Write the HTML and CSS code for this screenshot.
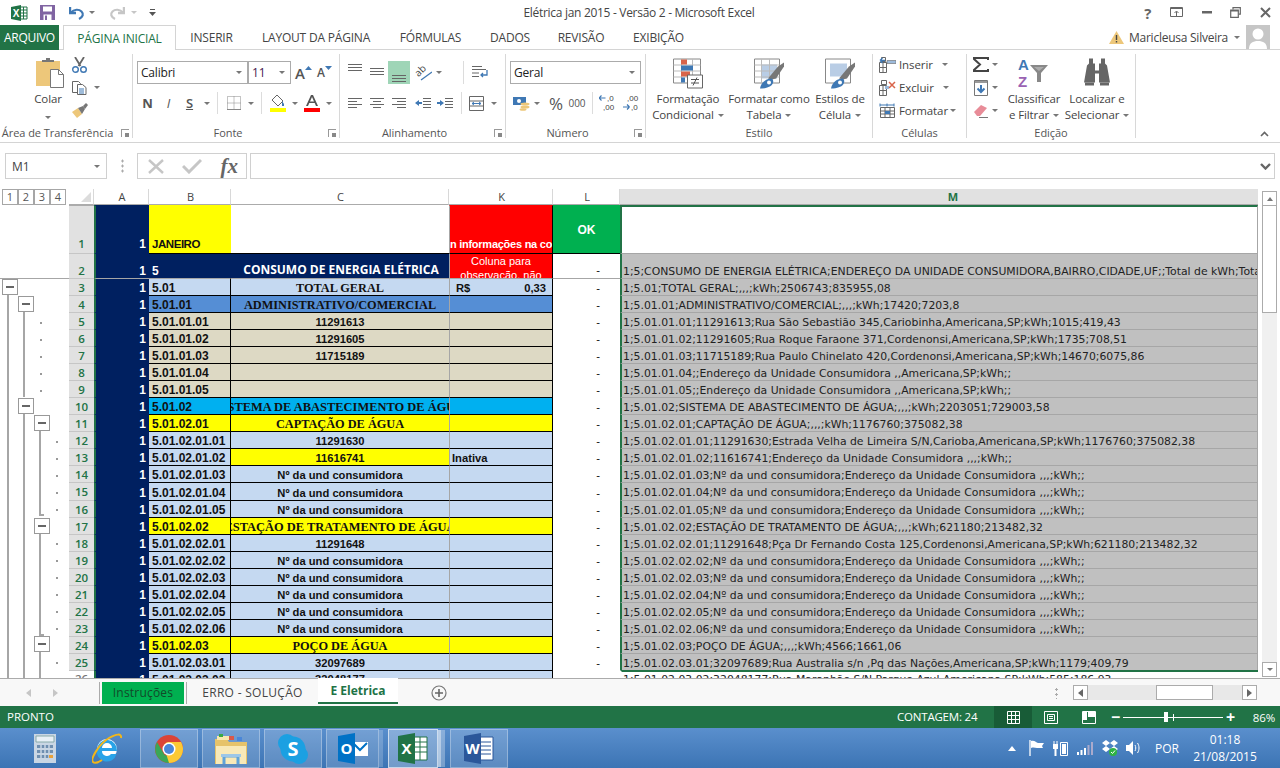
FILE: index.html
```html
<!DOCTYPE html>
<html lang="pt-BR">
<head>
<meta charset="utf-8">
<title>Elétrica jan 2015 - Versão 2 - Microsoft Excel</title>
<link rel="stylesheet" href="styles.css">
</head>
<body>
<div class="app">
  <header class="titlebar">
    <div class="qat">
      <svg class="q-excel" width="17" height="16" viewBox="0 0 17 16"><path d="M9 2h7v12H9z" fill="#fff" stroke="#217346"/><path d="M9 5h7M9 8h7M9 11h7M12.5 2v12" stroke="#217346"/><path d="M0 2l10-2v16L0 14z" fill="#217346"/><text x="5" y="11.5" text-anchor="middle" class="svgx">X</text></svg>
      <svg class="q-save" width="15" height="15" viewBox="0 0 15 15"><path d="M0 0h15v15H0z" fill="#8064a2"/><path d="M3 1.500h9v5H3z" fill="#fff"/><path d="M3.500 9.500h8V15h-8z" fill="#fff"/><path d="M5 10.500h2V15H5z" fill="#8064a2"/></svg>
      <svg class="q-undo" width="16" height="14" viewBox="0 0 16 14"><path d="M1 1v6h6" fill="none" stroke="#3f78b4" stroke-width="2.400"/><path d="M2 6.500C5 3 10 3 12.500 5.500S14 11 10 13" fill="none" stroke="#3f78b4" stroke-width="2.200"/></svg>
      <i class="tri q-c1"></i>
      <svg class="q-redo" width="16" height="14" viewBox="0 0 16 14"><path d="M15 1v6H9" fill="none" stroke="#c6c6c6" stroke-width="2.400"/><path d="M14 6.500C11 3 6 3 3.500 5.500S2 11 6 13" fill="none" stroke="#c6c6c6" stroke-width="2.200"/></svg>
      <i class="tri tri-l q-c2"></i>
      <svg class="q-cust" width="7" height="7" viewBox="0 0 7 7"><path d="M1 .5h5" stroke="#555"/><path d="M0 3h7L3.500 7z" fill="#555"/></svg>
    </div>
    <div class="doc-title">Elétrica jan 2015 - Versão 2 - Microsoft Excel</div>
    <div class="winbtns">
      <span class="wb help">?</span>
      <span class="wb"><svg width="14" height="11" viewBox="0 0 14 11"><path d="M.5.500h12v9H.5z" fill="none" stroke="#666"/><path d="M1 1h11v1H1z" fill="#666"/><path d="M6.500 9V4.500M4.500 6l2-2 2 2" fill="none" stroke="#666"/></svg></span>
      <span class="wb"><svg width="10" height="3" viewBox="0 0 10 3"><path d="M0 0h10v2.500H0z" fill="#666"/></svg></span>
      <span class="wb"><svg width="11" height="11" viewBox="0 0 11 11"><path d="M3 2.500V.7h7.300v6.500H8.500" fill="none" stroke="#666" stroke-width="1.200"/><path d="M.7 3h7.600v7.300H.7z" fill="#fff" stroke="#666" stroke-width="1.200"/><path d="M.7 3h7.600v1.500H.7z" fill="#666"/></svg></span>
      <span class="wb"><svg width="11" height="11" viewBox="0 0 11 11"><path d="M1 1l9 9M10 1l-9 9" stroke="#666" stroke-width="2"/></svg></span>
    </div>
  </header>

  <nav class="tabs">
    <div class="tab file">ARQUIVO</div>
    <div class="tab active">PÁGINA INICIAL</div>
    <div class="tab">INSERIR</div>
    <div class="tab">LAYOUT DA PÁGINA</div>
    <div class="tab">FÓRMULAS</div>
    <div class="tab">DADOS</div>
    <div class="tab">REVISÃO</div>
    <div class="tab">EXIBIÇÃO</div>
    <div class="user">
      <svg width="15" height="13" viewBox="0 0 15 13"><path d="M7.500 0L15 13H0z" fill="#edc77a"/><path d="M6.800 4h1.400v5H6.800zM6.800 10h1.400v1.500H6.800z" fill="#444"/></svg>
      <span class="uname">Maricleusa Silveira</span>
      <i class="tri tri-d"></i>
      <svg class="avatar" width="24" height="24" viewBox="0 0 24 24"><path d="M0 0h24v24H0z" fill="#c6c6c6"/><circle cx="12" cy="9" r="5.500" fill="#fff"/><path d="M3 24c0-6 4-8 9-8s9 2 9 8z" fill="#fff"/></svg>
    </div>
  </nav>

  <section class="ribbon">
    <div class="grp g1">
      <div class="body b-clip">
        <div class="big b-colar">
          <svg class="paste" width="28" height="31" viewBox="0 0 28 31"><path d="M0 3h24v25H0z" fill="#edc77a"/><path d="M6 4V2h4V0h4v2h4v2z" fill="#777"/><path d="M14.500 11.500h8l5 5v13h-13z" fill="#fff" stroke="#777"/><path d="M22.500 11.500v5h5" fill="none" stroke="#777"/></svg>
          <span class="lbl">Colar</span>
          <span class="lbl"><i class="tri tri-d0"></i></span>
        </div>
        <div class="smcol">
          <span class="sm"><svg width="15" height="16" viewBox="0 0 15 16"><path d="M3 0l5.500 9M12 0L6.500 9" stroke="#666" stroke-width="1.800" fill="none"/><circle cx="3.500" cy="12.500" r="2.800" fill="none" stroke="#3f78b4" stroke-width="1.400"/><circle cx="11.500" cy="12.500" r="2.800" fill="none" stroke="#3f78b4" stroke-width="1.400"/></svg></span>
          <span class="sm"><svg class="m-copy" width="15" height="14" viewBox="0 0 15 14"><path d="M.5.500h6l2 2v9h-8z" fill="#fff" stroke="#666"/><path d="M5.500 3.500h5l3.500 3v7H5.500z" fill="#fff" stroke="#666"/><path d="M7 8h5M7 10h5M7 12h5" stroke="#3f78b4"/></svg><i class="tri"></i></span>
          <span class="sm"><svg width="16" height="15" viewBox="0 0 16 15"><path d="M0 9l6-4 4 6-5 4z" fill="#edc77a"/><path d="M6 5l5-2 2 3-3 5z" fill="#777"/><path d="M11 3l3-3 2 2-3 4z" fill="#777"/></svg></span>
        </div>
      </div>
      <div class="lab has-l">Área de Transferência<i class="launch"></i></div>
    </div>

    <div class="grp g2">
      <div class="body col">
        <div class="rw r1">
          <div class="combo c-font"><span>Calibri</span><i class="tri"></i></div>
          <div class="combo c-size"><span class="sz">11</span><i class="tri"></i></div>
          <span class="ib f-a">A<svg width="7" height="4" viewBox="0 0 7 4"><path d="M0 4l3.500-4L7 4z" fill="#3f78b4"/></svg></span>
          <span class="ib f-a sm2">A<svg width="7" height="4" viewBox="0 0 7 4"><path d="M0 0l3.500 4L7 0z" fill="#3f78b4"/></svg></span>
        </div>
        <div class="rw r2">
          <span class="ib bf">N</span><span class="ib itf">I</span><span class="ib uf">S</span><i class="car"><i class="tri"></i></i>
          <i class="vs"></i>
          <span class="ib"><svg width="14" height="14" viewBox="0 0 14 14"><path d="M.5.500h13v13H.5zM7 .5v13M.5 7h13" fill="none" stroke="#888" stroke-dasharray="1 1"/><path d="M0 13.500h14" stroke="#888"/></svg></span><i class="car"><i class="tri"></i></i>
          <i class="vs v2"></i>
          <span class="ib"><svg width="16" height="18" viewBox="0 0 16 18"><path d="M2 6l5-5 6 6-5 5z" fill="#fff" stroke="#666"/><path d="M12 7l2 3v2h-2z" fill="#3f78b4"/><path d="M0 14h16v4H0z" fill="#ff0"/></svg></span><i class="car"><i class="tri"></i></i>
          <span class="ib"><svg width="16" height="18" viewBox="0 0 16 18"><path d="M2 12L7 1h2l5 11h-2l-1.300-3H5.300L4 12zM6 7.500h4L8 3z" fill="#555" fill-rule="evenodd"/><path d="M0 14h16v4H0z" fill="#f00"/></svg></span><i class="car"><i class="tri"></i></i>
        </div>
      </div>
      <div class="lab has-l">Fonte<i class="launch"></i></div>
    </div>

    <div class="grp g3">
      <div class="body col">
        <div class="rw r1">
          <span class="ib"><svg class="al-t" width="14" height="7" viewBox="0 0 14 7"><path d="M0 .5h14M0 3.500h14M0 6.500h14" stroke="#666"/></svg></span>
          <span class="ib"><svg class="al-m" width="14" height="7" viewBox="0 0 14 7"><path d="M0 .5h14M0 3.500h14M0 6.500h14" stroke="#666"/></svg></span>
          <span class="ib sel"><svg class="al-b" width="14" height="7" viewBox="0 0 14 7"><path d="M0 .5h14M0 3.500h14M0 6.500h14" stroke="#666"/></svg></span>
          <span class="ib ml2"><svg width="17" height="16" viewBox="0 0 17 16"><text x="1" y="10" class="svg-ab" transform="rotate(-45 5 8)">ab</text><path d="M6 15L17 7" stroke="#3f78b4" stroke-width="1.200"/></svg></span><i class="car c10"><i class="tri"></i></i>
          <i class="vs v3"></i>
          <span class="ib"><svg width="16" height="14" viewBox="0 0 16 14"><path d="M0 .5h10M0 3.500h14M0 7h7M0 10.500h7" stroke="#666"/><path d="M15 4v5h-6M11 7l-2 2 2 2" fill="none" stroke="#3f78b4" stroke-width="1.300"/></svg></span>
        </div>
        <div class="rw r2">
          <span class="ib"><svg width="14" height="11" viewBox="0 0 14 11"><path d="M0 .5h14M0 3.500h9M0 6.500h14M0 9.500h9" stroke="#666"/></svg></span>
          <span class="ib"><svg width="14" height="11" viewBox="0 0 14 11"><path d="M0 .5h14M3 3.500h8M0 6.500h14M3 9.500h8" stroke="#666"/></svg></span>
          <span class="ib"><svg width="14" height="11" viewBox="0 0 14 11"><path d="M0 .5h14M5 3.500h9M0 6.500h14M5 9.500h9" stroke="#666"/></svg></span>
          <span class="ib ml2"><svg width="16" height="11" viewBox="0 0 16 11"><path d="M8 .5h8M8 3.500h8M8 6.500h8M8 9.500h8" stroke="#666"/><path d="M0 5l4-3v2h3v2H4v2z" fill="#3f78b4"/></svg></span>
          <span class="ib"><svg width="16" height="11" viewBox="0 0 16 11"><path d="M8 .5h8M8 3.500h8M8 6.500h8M8 9.500h8" stroke="#666"/><path d="M7 5L3 2v2H0v2h3v2z" fill="#3f78b4"/></svg></span>
          <i class="vs v4"></i>
          <span class="ib"><svg width="15" height="15" viewBox="0 0 15 15"><path d="M.5.500h14v14H.5zM.5 5h14M.5 10h14" fill="none" stroke="#666"/><path d="M3 7.500h9M3 7.500l2-1.500M3 7.500l2 1.500M12 7.500L10 6M12 7.500L10 9" stroke="#3f78b4"/></svg></span><i class="car"><i class="tri"></i></i>
        </div>
      </div>
      <div class="lab has-l">Alinhamento<i class="launch"></i></div>
    </div>

    <div class="grp g4">
      <div class="body col">
        <div class="rw r1"><div class="combo c-num"><span>Geral</span><i class="tri"></i></div></div>
        <div class="rw r2">
          <span class="ib"><svg width="17" height="15" viewBox="0 0 17 15"><path d="M0 1h13v8H0z" fill="#3f78b4"/><circle cx="6" cy="5" r="2" fill="#fff"/><ellipse cx="12" cy="8" rx="4.500" ry="1.500" fill="#edc77a"/><ellipse cx="12" cy="11" rx="4.500" ry="1.500" fill="#edc77a"/><ellipse cx="10" cy="13.500" rx="3.500" ry="1.300" fill="#edc77a"/></svg></span><i class="car c10"><i class="tri"></i></i>
          <span class="ib ml3 pct">%</span>
          <span class="ib w20 mil">000</span>
          <i class="vs v5"></i>
          <span class="ib dec"><svg width="17" height="18" viewBox="0 0 17 18"><path d="M0 4h6.500M0 4l2.500-2.500M0 4l2.500 2.500" stroke="#3f78b4" fill="none" stroke-width="1.200"/><text x="8" y="7" class="svgd">,0</text><text x="4" y="16" class="svgd">,00</text></svg></span>
          <span class="ib ml2 dec"><svg width="17" height="18" viewBox="0 0 17 18"><text x="4" y="7" class="svgd">,00</text><text x="8" y="16" class="svgd">,0</text><path d="M0 13h6.500M6.500 13L4 10.500M6.500 13L4 15.500" stroke="#3f78b4" fill="none" stroke-width="1.200"/></svg></span>
        </div>
      </div>
      <div class="lab has-l">Número<i class="launch"></i></div>
    </div>

    <div class="grp g5">
      <div class="body">
        <div class="big b-f">
          <svg width="30" height="30" viewBox="0 0 30 30"><path d="M.5.500h27v24H.5z" fill="#fff" stroke="#888"/><path d="M.5 6.500h27M.5 12.500h27M.5 18.500h27M8.500.5v24M19.500.5v24" stroke="#bbb"/><path d="M8 1h6v5H8z" fill="#d9644a"/><path d="M8 7h12v5H8z" fill="#3f78b4"/><path d="M8 13h9v5H8z" fill="#d9644a"/><path d="M8 19h4v5H8z" fill="#3f78b4"/><path d="M14.500 16.500h15v13h-15z" fill="#fff" stroke="#666"/><path d="M18 21h8M18 24.500h8M24 19l-4 8" stroke="#555"/></svg>
          <span class="lbl">Formatação</span>
          <span class="lbl">Condicional<i class="tri tri-i"></i></span>
        </div>
        <div class="big b-t">
          <svg width="30" height="30" viewBox="0 0 30 30"><path d="M.5.500h25v24H.5z" fill="#fff" stroke="#888"/><path d="M7 6h16v14H7z" fill="#b9cde5"/><path d="M.5 6.500h25M.5 12.500h25M.5 18.500h25M7.500.5v24M15.500.5v24" stroke="#bbb"/><path d="M14 20l10-12 6-4v4l-8 12-4 1z" fill="#777"/><path d="M6 30c1-6 6-10 12-10 3 3 1 10-12 10z" fill="#3f78b4"/><circle cx="15" cy="24" r="2" fill="#fff"/></svg>
          <span class="lbl">Formatar como</span>
          <span class="lbl">Tabela<i class="tri tri-i"></i></span>
        </div>
        <div class="big b-e">
          <svg width="30" height="30" viewBox="0 0 30 30"><path d="M.5.500h25v24H.5z" fill="#fff" stroke="#888"/><path d="M5 5h17v13H5z" fill="#b9cde5"/><path d="M14 20l10-12 6-4v4l-8 12-4 1z" fill="#777"/><path d="M6 30c1-6 6-10 12-10 3 3 1 10-12 10z" fill="#3f78b4"/><circle cx="15" cy="24" r="2" fill="#fff"/></svg>
          <span class="lbl">Estilos de</span>
          <span class="lbl">Célula<i class="tri tri-i"></i></span>
        </div>
      </div>
      <div class="lab">Estilo</div>
    </div>

    <div class="grp g6">
      <div class="body">
        <div class="smcol">
          <span class="sm"><svg class="m-ic" width="17" height="16" viewBox="0 0 17 16"><path d="M2.500 0.500h4v4h-4zM.5 5.500h7v5h-7zM.5 10.500h7v5h-7zM4 5.500v10" fill="none" stroke="#666"/><path d="M8 3.500h9v3H8z" fill="#9dbbdc" stroke="#666" stroke-width=".6"/><path d="M1 3.500h5M1 3.500l2.500-2.500M1 3.500L3.500 6" stroke="#3f78b4" stroke-width="1.300" fill="none"/></svg><span class="t">Inserir</span><i class="car c10 far"><i class="tri"></i></i></span>
          <span class="sm"><svg class="m-ic" width="17" height="16" viewBox="0 0 17 16"><path d="M2.500 0.500h5v4h-5zM.5 5.500h7v5h-7zM.5 10.500h7v5h-7zM4 5.500v10" fill="none" stroke="#666"/><path d="M6 6h4v3H6z" fill="#9dbbdc"/><path d="M10 2l6 6M16 2l-6 6" stroke="#d9644a" stroke-width="1.500"/></svg><span class="t">Excluir</span><i class="car c10 far"><i class="tri"></i></i></span>
          <span class="sm"><svg class="m-ic" width="17" height="16" viewBox="0 0 17 16"><path d="M1 .5v3M8 .5v3M15 .5v3M1 2h14" stroke="#3f78b4" fill="none"/><path d="M1.500 4.500h14v10h-14zM1.500 8h14M1.500 11h14M6 4.500v10M11 4.500v10" fill="none" stroke="#666"/><path d="M6 8h5v3H6z" fill="#3f78b4"/></svg><span class="t">Formatar</span><i class="car c10"><i class="tri"></i></i></span>
        </div>
      </div>
      <div class="lab">Células</div>
    </div>

    <div class="grp g7">
      <div class="body">
        <div class="smcol">
          <span class="sm"><svg class="m-ed" width="16" height="15" viewBox="0 0 16 15"><path d="M15 3V1H1v1l6 5.500L1 13v1h14v-2" fill="none" stroke="#444" stroke-width="2"/></svg><i class="car c10"><i class="tri"></i></i></span>
          <span class="sm"><svg class="m-ed" width="14" height="16" viewBox="0 0 14 16"><path d="M.5.500h13v15H.5z" fill="#fff" stroke="#777"/><path d="M1 1h12v2H1z" fill="#999"/><path d="M7 5v7M3.500 8.500L7 12l3.500-3.500" fill="none" stroke="#3f78b4" stroke-width="2"/></svg><i class="car c10"><i class="tri"></i></i></span>
          <span class="sm"><svg class="m-ed" width="14" height="14" viewBox="0 0 14 14"><path d="M0 8l7-7 6 3-7 8H3z" fill="#e88c98"/><path d="M5 13.500h9" stroke="#777"/></svg><i class="car c10"><i class="tri"></i></i></span>
        </div>
        <div class="big b-c">
          <svg width="32" height="33" viewBox="0 0 32 33"><text x="0" y="13" class="svg-az blue">A</text><text x="0" y="30" class="svg-az purp">Z</text><path d="M12 8h18l-7 8v9h-4v-9z" fill="#888"/><path d="M16 10h10l-5 4z" fill="#fff" opacity=".3"/></svg>
          <span class="lbl">Classificar</span>
          <span class="lbl">e Filtrar<i class="tri tri-i"></i></span>
        </div>
        <div class="big b-l">
          <svg width="26" height="30" viewBox="0 0 26 30"><path d="M5 0h4v5h2v7h4V5h2V0h4v5l2 2 3 17H15V15h-4v9H0L3 7l2-2z" fill="#666"/><path d="M1 24h9v3H1zM16 24h9v3h-9z" fill="#666"/></svg>
          <span class="lbl">Localizar e</span>
          <span class="lbl">Selecionar<i class="tri tri-i"></i></span>
        </div>
      </div>
      <div class="lab">Edição</div>
    </div>
    <svg class="collapse" width="9" height="6" viewBox="0 0 9 6"><path d="M1 5l3.500-3.500L8 5" fill="none" stroke="#666" stroke-width="1.600"/></svg>
  </section>

  <section class="fbar">
    <div class="namebox"><span>M1</span><i class="tri tri-d"></i></div>
    <div class="fgrip"></div>
    <div class="fbtns">
      <svg width="16" height="15" viewBox="0 0 16 15"><path d="M1 1l14 13M15 1L1 14" stroke="#c6c6c6" stroke-width="2.400"/></svg>
      <svg width="20" height="16" viewBox="0 0 20 16"><path d="M1 8l6 6L19 2" fill="none" stroke="#c6c6c6" stroke-width="3"/></svg>
      <span class="fx">fx</span>
    </div>
    <div class="finput"><svg width="11" height="7" viewBox="0 0 11 7"><path d="M1 1l4.500 4.500L10 1" fill="none" stroke="#666" stroke-width="2.400"/></svg></div>
  </section>

  <main class="sheet">
    <svg class="outline" width="69" height="489" viewBox="0 0 69 489">
      <g class="lv">
        <rect x="2.500" y=".5" width="15" height="15"/><rect x="18.500" y=".5" width="15" height="15"/><rect x="34.500" y=".5" width="15" height="15"/><rect x="50.500" y=".5" width="15" height="15"/>
      </g>
      <text x="10" y="12" class="lvt">1</text><text x="26" y="12" class="lvt">2</text><text x="42" y="12" class="lvt">3</text><text x="58" y="12" class="lvt">4</text>
      <path d="M0 89.500h69" stroke="#a6a6a6"/>
      <path d="M8 105v384M24 122v86M24 224v265M40 241v85h4M40 344v102h4M40 462v27" stroke="#a6a6a6" stroke-width="2" fill="none"/>
      <g class="ob">
        <rect x="2.500" y="90.500" width="15" height="15"/><rect x="18.500" y="107.500" width="15" height="15"/><rect x="18.500" y="209.500" width="15" height="15"/><rect x="34.500" y="226.500" width="15" height="15"/><rect x="34.500" y="329.500" width="15" height="15"/><rect x="34.500" y="447.500" width="15" height="15"/>
      </g>
      <path d="M6 98h8M22 115h8M22 217h8M38 234h8M38 337h8M38 455h8" stroke="#666" stroke-width="2"/>
      <path d="M40 134h2M40 151h2M40 168h2M40 185h2M40 202h2M56 253h2M56 270h2M56 287h2M56 304h2M56 321h2M56 355h2M56 372h2M56 389h2M56 406h2M56 423h2M56 440h2M56 474h2" stroke="#999" stroke-width="2"/>
    </svg>
    <div class="grid">
      <div class="row hdr">
        <div class="corner"><svg width="10" height="10" viewBox="0 0 10 10"><path d="M10 0v10H0z" fill="#dcdcdc"/></svg></div>
        <div class="ch">A</div><div class="ch">B</div><div class="ch">C</div><div class="ch">K</div><div class="ch">L</div><div class="ch mh">M</div>
      </div>
      <div class="row r-one">
        <div class="rh">1</div><div class="ca">1</div><div class="cb yel">JANEIRO</div><div class="cc wht"></div><div class="ck red"><span class="clip">n informações na co</span></div><div class="cl okc">OK</div><div class="cm wht"></div>
      </div>
      <div class="row r-two">
        <div class="rh">2</div><div class="ca">1</div><div class="cb nvy">5</div><div class="cc nvy tit">CONSUMO DE ENERGIA ELÉTRICA</div><div class="ck red obs">Coluna para observação, não</div><div class="cl">-</div><div class="cm">1;5;CONSUMO DE ENERGIA ELÉTRICA;ENDEREÇO DA UNIDADE CONSUMIDORA,BAIRRO,CIDADE,UF;;Total de kWh;Total e</div>
      </div>
      <div class="row lb frz"><div class="rh">3</div><div class="ca">1</div><div class="cb">5.01</div><div class="cc ser">TOTAL GERAL</div><div class="ck rs"><span>R$</span><span>0,33</span></div><div class="cl">-</div><div class="cm">1;5.01;TOTAL GERAL;,,,;kWh;2506743;835955,08</div></div>
      <div class="row bl"><div class="rh">4</div><div class="ca">1</div><div class="cb">5.01.01</div><div class="cc ser">ADMINISTRATIVO/COMERCIAL</div><div class="ck"></div><div class="cl">-</div><div class="cm">1;5.01.01;ADMINISTRATIVO/COMERCIAL;,,,;kWh;17420;7203,8</div></div>
      <div class="row tn"><div class="rh">5</div><div class="ca">1</div><div class="cb">5.01.01.01</div><div class="cc">11291613</div><div class="ck"></div><div class="cl">-</div><div class="cm">1;5.01.01.01;11291613;Rua São Sebastião 345,Cariobinha,Americana,SP;kWh;1015;419,43</div></div>
      <div class="row tn"><div class="rh">6</div><div class="ca">1</div><div class="cb">5.01.01.02</div><div class="cc">11291605</div><div class="ck"></div><div class="cl">-</div><div class="cm">1;5.01.01.02;11291605;Rua Roque Faraone 371,Cordenonsi,Americana,SP;kWh;1735;708,51</div></div>
      <div class="row tn"><div class="rh">7</div><div class="ca">1</div><div class="cb">5.01.01.03</div><div class="cc">11715189</div><div class="ck"></div><div class="cl">-</div><div class="cm">1;5.01.01.03;11715189;Rua Paulo Chinelato 420,Cordenonsi,Americana,SP;kWh;14670;6075,86</div></div>
      <div class="row tn"><div class="rh">8</div><div class="ca">1</div><div class="cb">5.01.01.04</div><div class="cc"></div><div class="ck"></div><div class="cl">-</div><div class="cm">1;5.01.01.04;;Endereço da Unidade Consumidora ,,Americana,SP;kWh;;</div></div>
      <div class="row tn"><div class="rh">9</div><div class="ca">1</div><div class="cb">5.01.01.05</div><div class="cc"></div><div class="ck"></div><div class="cl">-</div><div class="cm">1;5.01.01.05;;Endereço da Unidade Consumidora ,,Americana,SP;kWh;;</div></div>
      <div class="row cy"><div class="rh">10</div><div class="ca">1</div><div class="cb">5.01.02</div><div class="cc ser wide">SISTEMA DE ABASTECIMENTO DE ÁGUA</div><div class="ck"></div><div class="cl">-</div><div class="cm">1;5.01.02;SISTEMA DE ABASTECIMENTO DE ÁGUA;,,,;kWh;2203051;729003,58</div></div>
      <div class="row ye"><div class="rh">11</div><div class="ca">1</div><div class="cb">5.01.02.01</div><div class="cc ser">CAPTAÇÃO DE ÁGUA</div><div class="ck"></div><div class="cl">-</div><div class="cm">1;5.01.02.01;CAPTAÇÃO DE ÁGUA;,,,;kWh;1176760;375082,38</div></div>
      <div class="row lb"><div class="rh">12</div><div class="ca">1</div><div class="cb">5.01.02.01.01</div><div class="cc">11291630</div><div class="ck"></div><div class="cl">-</div><div class="cm">1;5.01.02.01.01;11291630;Estrada Velha de Limeira S/N,Carioba,Americana,SP;kWh;1176760;375082,38</div></div>
      <div class="row lb"><div class="rh">13</div><div class="ca">1</div><div class="cb">5.01.02.01.02</div><div class="cc yel">11616741</div><div class="ck ina">Inativa</div><div class="cl">-</div><div class="cm">1;5.01.02.01.02;11616741;Endereço da Unidade Consumidora ,,,;kWh;;</div></div>
      <div class="row lb"><div class="rh">14</div><div class="ca">1</div><div class="cb">5.01.02.01.03</div><div class="cc">Nº da und consumidora</div><div class="ck"></div><div class="cl">-</div><div class="cm">1;5.01.02.01.03;Nº da und consumidora;Endereço da Unidade Consumidora ,,,;kWh;;</div></div>
      <div class="row lb tall"><div class="rh">15</div><div class="ca">1</div><div class="cb">5.01.02.01.04</div><div class="cc">Nº da und consumidora</div><div class="ck"></div><div class="cl">-</div><div class="cm">1;5.01.02.01.04;Nº da und consumidora;Endereço da Unidade Consumidora ,,,;kWh;;</div></div>
      <div class="row lb"><div class="rh">16</div><div class="ca">1</div><div class="cb">5.01.02.01.05</div><div class="cc">Nº da und consumidora</div><div class="ck"></div><div class="cl">-</div><div class="cm">1;5.01.02.01.05;Nº da und consumidora;Endereço da Unidade Consumidora ,,,;kWh;;</div></div>
      <div class="row ye"><div class="rh">17</div><div class="ca">1</div><div class="cb">5.01.02.02</div><div class="cc ser wide">ESTAÇÃO DE TRATAMENTO DE ÁGUA</div><div class="ck"></div><div class="cl">-</div><div class="cm">1;5.01.02.02;ESTAÇÃO DE TRATAMENTO DE ÁGUA;,,,;kWh;621180;213482,32</div></div>
      <div class="row lb"><div class="rh">18</div><div class="ca">1</div><div class="cb">5.01.02.02.01</div><div class="cc">11291648</div><div class="ck"></div><div class="cl">-</div><div class="cm">1;5.01.02.02.01;11291648;Pça Dr Fernando Costa 125,Cordenonsi,Americana,SP;kWh;621180;213482,32</div></div>
      <div class="row lb"><div class="rh">19</div><div class="ca">1</div><div class="cb">5.01.02.02.02</div><div class="cc">Nº da und consumidora</div><div class="ck"></div><div class="cl">-</div><div class="cm">1;5.01.02.02.02;Nº da und consumidora;Endereço da Unidade Consumidora ,,,;kWh;;</div></div>
      <div class="row lb"><div class="rh">20</div><div class="ca">1</div><div class="cb">5.01.02.02.03</div><div class="cc">Nº da und consumidora</div><div class="ck"></div><div class="cl">-</div><div class="cm">1;5.01.02.02.03;Nº da und consumidora;Endereço da Unidade Consumidora ,,,;kWh;;</div></div>
      <div class="row lb"><div class="rh">21</div><div class="ca">1</div><div class="cb">5.01.02.02.04</div><div class="cc">Nº da und consumidora</div><div class="ck"></div><div class="cl">-</div><div class="cm">1;5.01.02.02.04;Nº da und consumidora;Endereço da Unidade Consumidora ,,,;kWh;;</div></div>
      <div class="row lb"><div class="rh">22</div><div class="ca">1</div><div class="cb">5.01.02.02.05</div><div class="cc">Nº da und consumidora</div><div class="ck"></div><div class="cl">-</div><div class="cm">1;5.01.02.02.05;Nº da und consumidora;Endereço da Unidade Consumidora ,,,;kWh;;</div></div>
      <div class="row lb"><div class="rh">23</div><div class="ca">1</div><div class="cb">5.01.02.02.06</div><div class="cc">Nº da und consumidora</div><div class="ck"></div><div class="cl">-</div><div class="cm">1;5.01.02.02.06;Nº da und consumidora;Endereço da Unidade Consumidora ,,,;kWh;;</div></div>
      <div class="row ye"><div class="rh">24</div><div class="ca">1</div><div class="cb">5.01.02.03</div><div class="cc ser">POÇO DE ÁGUA</div><div class="ck"></div><div class="cl">-</div><div class="cm">1;5.01.02.03;POÇO DE ÁGUA;,,,;kWh;4566;1661,06</div></div>
      <div class="row lb"><div class="rh">25</div><div class="ca">1</div><div class="cb">5.01.02.03.01</div><div class="cc">32097689</div><div class="ck"></div><div class="cl">-</div><div class="cm">1;5.01.02.03.01;32097689;Rua Australia s/n ,Pq das Nações,Americana,SP;kWh;1179;409,79</div></div>
      <div class="row lb last"><div class="rh">26</div><div class="ca">1</div><div class="cb">5.01.02.03.02</div><div class="cc">32048177</div><div class="ck"></div><div class="cl">-</div><div class="cm">1;5.01.02.03.02;32048177;Rua Maranhão S/N,Parque Azul,Americana,SP;kWh;585;186,93</div></div>
    </div>
    <div class="vscroll">
      <div class="sbtn"><i class="tri tri-u"></i></div>
      <div class="vthumb"></div>
      <div class="vtrack"></div>
      <div class="sbtn"><i class="tri"></i></div>
    </div>
  </main>

  <section class="sheettabs">
    <div class="nav"><i class="ar ar-l"></i><i class="ar ar-r"></i></div>
    <div class="stab st-green">Instruções</div>
    <div class="stab st-plain">ERRO - SOLUÇÃO</div>
    <div class="stab st-on">E Eletrica</div>
    <svg class="addsheet" width="16" height="16" viewBox="0 0 16 16"><circle cx="8" cy="8" r="7" fill="none" stroke="#777" stroke-width="1.200"/><path d="M4 8h8M8 4v8" stroke="#666" stroke-width="1.600"/></svg>
    <div class="hgrip"></div>
    <div class="hscroll">
      <div class="hbtn"><i class="ar ar-l dk"></i></div>
      <div class="hthumb"></div>
      <div class="hbtn"><i class="ar ar-r dk"></i></div>
    </div>
  </section>

  <footer class="status">
    <span class="pronto">PRONTO</span>
    <span class="count">CONTAGEM: 24</span>
    <span class="vw on"><svg width="13" height="13" viewBox="0 0 13 13"><path d="M.5.500h12v12H.5zM4.500.5v12M8.500.5v12M.5 4.500h12M.5 8.500h12" fill="none" stroke="#fff"/></svg></span>
    <span class="vw"><svg width="14" height="13" viewBox="0 0 14 13"><path d="M.5.500h13v12H.5z" fill="none" stroke="#fff"/><path d="M3.500 3.500h7v6h-7z" fill="none" stroke="#fff"/><path d="M5 5.500h4M5 7.500h4" stroke="#fff"/></svg></span>
    <span class="vw"><svg width="14" height="13" viewBox="0 0 14 13"><path d="M.5.500h13v12H.5z" fill="none" stroke="#fff"/><path d="M1 1h4v8H1zM6 1h7v5H6z" fill="#fff"/></svg></span>
    <span class="zm">−</span>
    <svg class="slider" width="100" height="22" viewBox="0 0 100 22"><path d="M0 11.500h100" stroke="#fff"/><path d="M50.500 8v7" stroke="#fff"/><path d="M41 6h4v10h-4z" fill="#fff"/></svg>
    <span class="zm">+</span>
    <span class="pc">86%</span>
  </footer>

  <div class="taskbar">
    <span class="slot"><svg width="22" height="29" viewBox="0 0 22 29"><path d="M0 0h22v29H0z" fill="#c9d6e4"/><path d="M2 2h18v6H2z" fill="#e8f0f6" stroke="#8aa"/><path d="M3 11h16v3H3zM3 16h16v3H3zM3 21h16v3H3z" fill="#6f8fb0"/><path d="M7 10v15M11 10v15M15 10v15" stroke="#c9d6e4" stroke-width="1.500"/><path d="M15 21h4v3h-4z" fill="#e8a13a"/></svg></span>
    <span class="slot"><svg width="30" height="31" viewBox="0 0 30 31"><circle cx="15" cy="16" r="10" fill="#fff"/><path d="M5 16a10 10 0 1 1 20 2H10a5 5 0 0 0 9 3h5.500A10 10 0 0 1 5 16zm5-1h10a5 5 0 0 0-10 0z" fill="#29a3e8" fill-rule="evenodd"/><path d="M1 29c-3-3 6-18 16-24C24 1 30 0 29 5M1 29c2 2 6 0 9-2" fill="none" stroke="#f2b619" stroke-width="2"/></svg></span>
    <span class="slot box"><svg width="28" height="28" viewBox="0 0 28 28"><circle cx="14" cy="14" r="14" fill="#db4437"/><path d="M14 28A14 14 0 0 1 2 7l7 12c1 2 6 3 9 1z" fill="#3aa757"/><path d="M26 7H14c-3 0-5 2-5 5l5 16c8 0 14-6 14-14 0-3-1-5-2-7z" fill="#fcc934"/><circle cx="14" cy="14" r="6.500" fill="#fff"/><circle cx="14" cy="14" r="5" fill="#4a86d8"/></svg></span>
    <span class="slot box"><svg width="32" height="30" viewBox="0 0 32 30"><path d="M0 5h12l2 3h18v22H0z" fill="#e6c36a"/><path d="M2 2h12l2 4H2z" fill="#f6e7b0"/><path d="M4 0h4v3H4z" fill="#39a845"/><path d="M14 2h5v4h-5z" fill="#d9584a"/><path d="M22 3h5v4h-5z" fill="#4a86d8"/><path d="M1 12h30v18H1z" fill="#f8e9b8"/><path d="M9 30v-8h14v8" fill="none" stroke="#5fa3d9" stroke-width="3"/><path d="M6 20h20v3H6z" fill="#9cc7e8"/></svg></span>
    <span class="slot box"><svg width="30" height="30" viewBox="0 0 30 30"><circle cx="9" cy="9" r="9" fill="#1ba0e2"/><circle cx="21" cy="21" r="9" fill="#1ba0e2"/><circle cx="15" cy="15" r="12.500" fill="#1ba0e2"/><text x="15" y="22" class="svg-s">S</text></svg></span>
    <span class="slot box ol"><svg width="30" height="31" viewBox="0 0 30 31"><path d="M14 9h16v14H14z" fill="#fff"/><path d="M15 10l7 7 7-7" fill="none" stroke="#0072c6" stroke-width="2"/><path d="M0 3l17-3v31L0 28z" fill="#0072c6"/><text x="8.500" y="21" class="svg-o">O</text></svg></span>
    <span class="slot box xl"><svg width="30" height="31" viewBox="0 0 30 31"><path d="M15 4h14v23H15z" fill="#fff" stroke="#217346"/><path d="M15 9h14M15 14h14M15 19h14M22 4v23" stroke="#217346"/><path d="M0 3l17-3v31L0 28z" fill="#217346"/><text x="8.500" y="21" class="svg-o">X</text></svg></span>
    <span class="slot box"><svg width="30" height="31" viewBox="0 0 30 31"><path d="M15 4h14v23H15z" fill="#fff" stroke="#2b579a"/><path d="M17 9h10M17 13h10M17 17h10M17 21h10" stroke="#2b579a"/><path d="M0 3l17-3v31L0 28z" fill="#2b579a"/><text x="8.500" y="21" class="svg-o">W</text></svg></span>
    <div class="tray">
      <span class="ti"><svg width="8" height="5" viewBox="0 0 8 5"><path d="M0 5l4-5 4 5z" fill="#fff"/></svg></span>
      <span class="ti"><svg width="16" height="16" viewBox="0 0 16 16"><path d="M1 0v16" stroke="#fff" stroke-width="1.300"/><path d="M2 1c4-1 5 2 7 2h6l-2 3 1 2H8c-2 0-3-1-6 0z" fill="#fff"/></svg></span>
      <span class="ti"><svg width="15" height="15" viewBox="0 0 15 15"><path d="M1 0v3M4 0v3" stroke="#fff"/><path d="M0 3h5v5H3.500v7h-2V8H0z" fill="#fff"/><path d="M7.500 1.500h7v13h-7z" fill="none" stroke="#fff"/><path d="M9 3h4v10H9z" fill="#fff"/></svg></span>
      <span class="ti"><svg width="16" height="13" viewBox="0 0 16 13"><path d="M0 10h2v3H0zM3.500 8h2v5h-2zM7 6h2v7H7z" fill="#fff"/><path d="M10.500 3h2v10h-2zM14 0h2v13h-2z" fill="#aac"/></svg></span>
      <span class="ti"><svg width="16" height="16" viewBox="0 0 16 16"><path d="M4 0l4 3-4 3-4-3zM12 0l4 3-4 3-4-3zM4 6l4 3-4 3-4-3zM12 6l4 3-4 3-4-3z" fill="#fff"/><circle cx="11" cy="12" r="4" fill="#2fb344"/><path d="M9 12l1.500 1.500L13 10.500" stroke="#fff" fill="none"/></svg></span>
      <span class="ti"><svg width="15" height="14" viewBox="0 0 15 14"><path d="M0 4h3l4-4v14l-4-4H0z" fill="#fff"/><path d="M9 4c1 2 1 4 0 6M11.500 2c2 3 2 7 0 10" fill="none" stroke="#fff"/></svg></span>
      <span class="lang">POR</span>
      <span class="clock"><span>01:18</span><span>21/08/2015</span></span>
    </div>
  </div>
</div>
</body>
</html>
```

FILE: styles.css
```css
* { box-sizing: border-box; }
html, body { margin: 0; padding: 0; }
body { width: 1280px; height: 768px; overflow: hidden; background: #fff; color: #444; font: 12px "Open Sans", sans-serif; }
i { font-style: normal; }
.app { display: flex; flex-direction: column; width: 1280px; height: 768px; }
svg { display: block; flex: none; }

.tri { display: inline-block; width: 0; height: 0; border-left: 3.5px solid transparent; border-right: 3.5px solid transparent; border-top: 3.5px solid #777; }
.tri-d0 { display: inline-block; width: 0; height: 0; border-left: 3.5px solid transparent; border-right: 3.5px solid transparent; border-top: 3.5px solid #777; }
.tri-l { border-top-color: #c6c6c6; }
.tri-u { border-top: 0; border-bottom: 4px solid #777; }
.tri-i { margin-left: 4px; vertical-align: 2px; }

/* title */
.titlebar { height: 25px; display: grid; grid-template-columns: 1fr auto 1fr; align-items: center; }
.qat { display: flex; align-items: center; padding-left: 11px; }
.q-save { margin-left: 12px; }
.q-undo { margin-left: 14px; }
.q-c1 { margin-left: 4px; }
.q-redo { margin-left: 14px; }
.q-c2 { margin-left: 6px; }
.q-cust { margin-left: 12px; }
.svgx { font: bold 10px "Liberation Sans", sans-serif; fill: #fff; }
.doc-title { font-size: 12px; color: #444; letter-spacing: -.3px; padding-bottom: 1px; margin-right: 2px; }
.winbtns { display: grid; grid-template-columns: repeat(5, 29.400px); justify-self: end; }
.wb { display: flex; align-items: center; justify-content: center; height: 23px; }
.help { font: bold 15px "Open Sans", sans-serif; color: #666; }

/* tabs */
.tabs { height: 25px; display: grid; grid-template-columns: 63px 113px 71px 138px 91px 68px 74px 81px 1fr; border-bottom: 1px solid #d4d4d4; }
.tab { display: flex; align-items: center; justify-content: center; font-size: 12px; color: #444; letter-spacing: -.2px; }
.tab.file { background: #217346; color: #fff; width: 59px; height: 25px; letter-spacing: -.3px; }
.tab.active { height: 25px; background: #fff; border: 1px solid #d4d4d4; border-bottom: 0; color: #217346; }
.user { display: flex; align-items: center; justify-content: flex-end; padding-right: 10px; height: 24px; }
.uname { margin-left: 5px; color: #444; letter-spacing: -.25px; }
.tri-d { margin-left: 6px; }
.avatar { margin-left: 6px; }

/* ribbon */
.ribbon { height: 93px; display: flex; align-items: flex-start; padding-top: 4px; border-bottom: 1px solid #d4d4d4; position: relative; }
.grp { height: 84px; border-right: 1px solid #d8d8d8; display: flex; flex-direction: column; position: relative; }
.g1 { width: 133px; } .g2 { width: 207px; } .g3 { width: 166px; } .g4 { width: 140px; } .g5 { width: 227px; } .g6 { width: 94px; } .g7 { width: 169px; }
.body { height: 71px; flex: none; display: flex; }
.body.col { flex-direction: column; padding: 7px 0 0 4px; gap: 8px; }
.lab { height: 13px; line-height: 16px; text-align: center; font-size: 11px; color: #555; letter-spacing: -.05px; }
.has-l { padding-right: 16px; }
.g1 .has-l { padding-right: 17px; }
.launch { position: absolute; right: 3px; bottom: 1px; width: 8px; height: 8px; border-left: 1px solid #999; border-top: 1px solid #999; }
.launch::after { content: ""; position: absolute; right: 0; bottom: 0; width: 4px; height: 4px; background: #888; }
.collapse { position: absolute; right: 11px; top: 81px; }

.rw { display: flex; align-items: center; }
.r1 { height: 23px; } .r2 { height: 22px; }
.ib { width: 21px; height: 22px; display: flex; align-items: center; justify-content: center; flex: none; }
.g3 .ib, .g4 .ib { width: 22px; }
.g3 .r1 .ib { height: 23px; }
.al-t { margin-top: -11px; } .al-m { margin-top: -2px; } .al-b { margin-top: 11px; }
.svg-ab { font: 10px "Open Sans", sans-serif; fill: #444; }
.car { width: 13px; display: flex; justify-content: center; flex: none; }
.c10 { width: 10px; }
.far { margin-left: 7px; }
.vs { width: 1px; height: 22px; background: #dcdcdc; margin: 0 5px 0 4px; flex: none; }
.v2 { margin: 0 5px 0 4px; }
.v3 { margin: 0 5px 0 19px; height: 23px; }
.v4 { margin: 0 3px 0 5px; }
.v5 { margin: 0 3px 0 5px; }
.ml2 { margin-left: 2px; } .ml3 { margin-left: 3px; }
.sel { background: #9fd5b7; }

.combo { height: 23px; border: 1px solid #ababab; display: flex; align-items: center; justify-content: space-between; padding: 0 5px 0 3px; color: #222; flex: none; font-size: 12px; letter-spacing: -.2px; }
.c-font { width: 111px; } .c-size { width: 43px; } .c-num { width: 131px; }
.sz { color: #4a1850; }
.f-a { position: relative; width: 21px; color: #555; font-size: 15px; font-weight: 600; margin-left: 2px; }
.f-a.sm2 { font-size: 12px; margin-left: 0; }
.f-a svg { margin: -9px 0 0 0; }
.bf { font: bold 13px "Open Sans", sans-serif; color: #555; }
.itf { font: italic 13px "Open Sans", sans-serif; color: #555; }
.uf { font: 600 13px "Open Sans", sans-serif; color: #555; text-decoration: underline; }
.pct { font-size: 17px; color: #555; }
.w20 { width: 20px !important; }
.mil { font-size: 10px; color: #555; }
.svgd { font: 8px "Liberation Sans", sans-serif; fill: #444; }

.big { display: flex; flex-direction: column; align-items: center; padding-top: 3px; flex: none; }
.big svg { height: 33px; margin-bottom: 1px; }
.big .paste { margin-left: 4px; }
.lbl { height: 16px; line-height: 16px; white-space: nowrap; font-size: 11.500px; color: #444; letter-spacing: -.1px; }
.b-colar { width: 44px; margin-left: 26px; }
.b-f { width: 84px; } .b-t { width: 78px; } .b-e { width: 64px; }
.b-c { width: 62px; } .b-l { width: 64px; }
.smcol { display: flex; flex-direction: column; gap: 2px; }
.sm { height: 21px; display: flex; align-items: center; }
.g1 .smcol { width: 50px; }
.g1 .sm svg { margin-left: 2px; }
.m-copy + .tri { margin-left: 7px; }
.g6 .smcol { padding-left: 6px; }
.m-ic { margin-right: 3px; }
.t { color: #444; font-size: 11.500px; letter-spacing: -.1px; }
.g7 .smcol { padding-left: 6px; width: 36px; }
.m-ed { margin-right: 1px; width: 16px; }
.svg-az { font: bold 15px "Liberation Sans", sans-serif; }
.blue { fill: #3f78b4; } .purp { fill: #9a62b3; }

/* formula bar */
.fbar { display: flex; height: 26px; margin: 10px 5px 10px 5px; }
.namebox { width: 102px; border: 1px solid #d0d0d0; display: flex; align-items: center; justify-content: space-between; padding: 0 6px 0 6px; font-size: 12px; color: #444; }
.fgrip { width: 30px; background: radial-gradient(circle, #aaa 1px, transparent 1.300px) center / 3px 5px repeat-y; margin: 5px 0; }
.fbtns { width: 110px; border: 1px solid #d0d0d0; display: flex; align-items: center; justify-content: space-between; padding: 0 8px 0 10px; }
.fx { font: italic bold 21px "Liberation Serif", serif; color: #666; }
.finput { flex: 1; margin-left: 3px; border: 1px solid #d0d0d0; display: flex; align-items: center; justify-content: flex-end; padding-right: 3px; }

/* sheet */
.sheet { height: 489px; display: flex; overflow: hidden; }
.outline { width: 69px; }
.lv rect { fill: #fff; stroke: #a6a6a6; }
.lvt { font: 11px "Open Sans", sans-serif; fill: #555; text-anchor: middle; }
.ob rect { fill: #fff; stroke: #999; }
.grid { width: 1189px; flex: none; }
.row { display: grid; grid-template-columns: 25px 55px 82px 218px 104px 67px 638px; height: 17px; font: bold 11.200px "Liberation Sans", sans-serif; color: #111; }
.row > div { overflow: hidden; white-space: nowrap; display: flex; align-items: center; border-top: 1px solid #000; padding-top: 2px; }
.hdr { height: 16px; }
.hdr > div { border-top: 0 !important; padding-top: 0; font: 11px "Open Sans", sans-serif; color: #444; justify-content: center; border-right: 1px solid #d8d8d8; border-bottom: 1px solid #ababab; }
.hdr .ch { padding-left: 2px; }
.corner { justify-content: flex-end !important; align-items: flex-end !important; padding: 0 2px 2px 0 !important; }
.hdr .ch.mh { background: #e1e1e1; color: #217346; font-weight: 700; border-right: 0; padding-left: 28px; }
.r-one { height: 48px; } .r-two { height: 25px; } .tall { height: 18px; }
.last { height: 17px; }

.row .rh { background: #e1e1e1; color: #217346; border-top: 1px solid #c6c6c6 !important; justify-content: center; font: 600 11.500px "Open Sans", sans-serif; padding-top: 0; }
.ca { background: #002060; color: #fff; justify-content: flex-end; padding-right: 3px; border-left: 2px solid #217346; border-top-color: #002060 !important; font-size: 12px; }
.cb { background: var(--c); padding-left: 3px; border-right: 1px solid #000; font-size: 12px; }
.cc { background: var(--c); justify-content: center; }
.ck { background: var(--c); border-left: 1px solid #a6a6a6; border-right: 1px solid #000; }
.cl { background: #fff; justify-content: flex-end; padding-right: 20px; font-weight: 400; border-top-color: transparent !important; }
.cm { background: #c0c0c0; border-left: 2px solid #217346; border-top-color: #a6a6a6 !important; border-right: 1px solid #a6a6a6; padding-left: 1px; font: 10.850px "DejaVu Sans", sans-serif; color: #222; }
.lb { --c: #c5d9f1; } .bl { --c: #558ed5; } .tn { --c: #ddd9c4; } .cy { --c: #00b0f0; } .ye { --c: #ff0; }
.ser { font: bold 12.300px "Liberation Serif", serif; }
.ser.wide { font-size: 12.450px; }
.yel { background: #ff0; } .nvy { background: #002060; color: #fff; } .wht { background: #fff; } .red { background: #f00; color: #fff; }

.r-one > div, .r-two > div { align-items: flex-end; padding-bottom: 2px; padding-top: 0; }
.r-two > div { padding-bottom: 0; }
.r-one .rh { border-top-color: #ababab !important; }
.r-one .cb { border-top-color: #ff0; border-right-color: #ff0; font-size: 11.500px; letter-spacing: -.45px; padding-bottom: 3px; }
.r-one .cc { border-top-color: #fff; }
.r-one .ck { border-top-color: #f00; border-left-color: #a6a6a6; justify-content: center; font-size: 11px; letter-spacing: -.25px; padding-bottom: 3px; }
.r-one .cl { align-items: center; justify-content: center; padding: 0; background: #00b050; color: #fff; font-weight: 700; font-size: 12px; border-right: 0; }
.r-one .cm { border-top: 2px solid #217346 !important; background: #fff; }
.clip { white-space: nowrap; }
.r-two .cb { border-right: 0; }
.r-two .tit { font: bold 12px "Open Sans", sans-serif; padding-left: 2px; }
.r-two .obs { white-space: normal; display: block; text-align: center; font: 11px/14px "Liberation Sans", sans-serif; padding: 0; overflow: hidden; }
.r-two .cl { padding-bottom: 2px; border-top-color: #000 !important; }
.frz > div { border-top-color: #a6a6a6 !important; }
.rs { justify-content: space-between; padding: 2px 6px 0 6px; }
.ina { padding-left: 2px; }
.row.last .rh { background: #fff; color: #777; }
.last .cm { background: #fff; border-top: 2px solid #217346 !important; border-right: 0; border-left-color: transparent; }
.last > div { align-items: flex-start; padding-top: 2px; }
.last .cm { padding-top: 1px; }

.vscroll { width: 22px; padding-left: 4px; display: flex; flex-direction: column; height: 489px; }
.sbtn { width: 15px; height: 15px; border: 1px solid #ababab; display: flex; align-items: center; justify-content: center; flex: none; margin-top: 2px; background: #fff; }
.vscroll .sbtn:last-child { margin-top: 0; margin-bottom: 1px; }
.vthumb { width: 15px; height: 107px; border: 1px solid #ababab; border-top: 0; background: #fff; flex: none; }
.vtrack { flex: 1; width: 15px; background: #f0f0f0; }

/* sheet tabs */
.sheettabs { height: 28px; background: #f8f8f8; border-top: 1px solid #ababab; display: flex; align-items: center; position: relative; }
.nav { width: 100px; height: 22px; border-right: 1px solid #ababab; display: flex; align-items: center; gap: 22px; padding-left: 26px; }
.ar { display: block; width: 0; height: 0; border-top: 4px solid transparent; border-bottom: 4px solid transparent; }
.ar-l { border-right: 5px solid #c6c6c6; }
.ar-r { border-left: 5px solid #c6c6c6; }
.ar.dk.ar-l { border-right-color: #666; } .ar.dk.ar-r { border-left-color: #666; }
.stab { height: 22px; display: flex; align-items: center; justify-content: center; font-size: 12px; padding-bottom: 1px; }
.st-green { width: 82px; margin-left: 2px; background: #00b050; color: #124a2a; letter-spacing: .2px; }
.st-plain { width: 132px; border-left: 1px solid #ababab; margin-left: 2px; color: #444; letter-spacing: .3px; }
.st-on { width: 80px; height: 26px; margin-top: -3px; background: #fff; color: #217346; font-weight: 700; border-bottom: 2px solid #217346; padding-top: 1px; }
.addsheet { margin-left: 33px; }
.hgrip { margin-left: auto; width: 3px; height: 12px; background: radial-gradient(circle, #aaa 1px, transparent 1.300px) center top / 3px 5px repeat-y; }
.hscroll { margin: 0 23px 0 15px; width: 184px; height: 15px; display: flex; background: #e8e8e8; position: relative; }
.hbtn { width: 15px; height: 15px; border: 1px solid #ababab; background: #fff; display: flex; align-items: center; justify-content: center; }
.hthumb { width: 57px; margin-left: 68px; margin-right: 29px; background: #fff; border: 1px solid #ababab; }

/* status */
.status { height: 22px; background: #217346; color: #fff; display: flex; align-items: center; padding-left: 7px; font-size: 11.500px; }
.pronto { width: 890px; padding-bottom: 1px; }
.count { width: 97px; letter-spacing: -.2px; padding-bottom: 1px; }
.vw { width: 38px; height: 22px; display: flex; align-items: center; justify-content: center; }
.vw.on { background: #185c37; }
.zm { width: 15px; text-align: center; font-size: 16px; font-weight: 700; line-height: 22px; }
.pc { margin-left: 10px; width: 32px; text-align: center; }

/* taskbar */
.taskbar { height: 40px; padding-left: 14px; display: flex; background: linear-gradient(#5a8fcd, #3c74b4); }
.slot { width: 62px; display: flex; align-items: center; justify-content: center; flex: none; }
.box { margin: 1px 2px 0; width: 58px; border: 1px solid rgba(255,255,255,.3); background: rgba(255,255,255,.16); }
.box.ol { width: 53px; margin-right: 7px; box-shadow: 5px 0 0 -1px rgba(255,255,255,.2); }
.box.xl { width: 50px; margin-right: 10px; background: rgba(255,255,255,.28); border-color: rgba(255,255,255,.6); box-shadow: 4px 0 0 -1px rgba(255,255,255,.4), 8px 0 0 -1px rgba(255,255,255,.3); }
.svg-s { font: bold 20px "Open Sans", sans-serif; fill: #fff; text-anchor: middle; }
.svg-o { font: bold 15px "Open Sans", sans-serif; fill: #fff; text-anchor: middle; }
.tray { margin-left: auto; display: flex; padding-right: 18px; color: #fff; }
.ti { width: 24.300px; display: flex; align-items: center; justify-content: center; }
.lang { width: 42px; display: flex; align-items: center; justify-content: center; font-size: 12px; }
.clock { width: 74px; display: flex; flex-direction: column; align-items: center; justify-content: center; font-size: 12px; line-height: 17px; }
```
